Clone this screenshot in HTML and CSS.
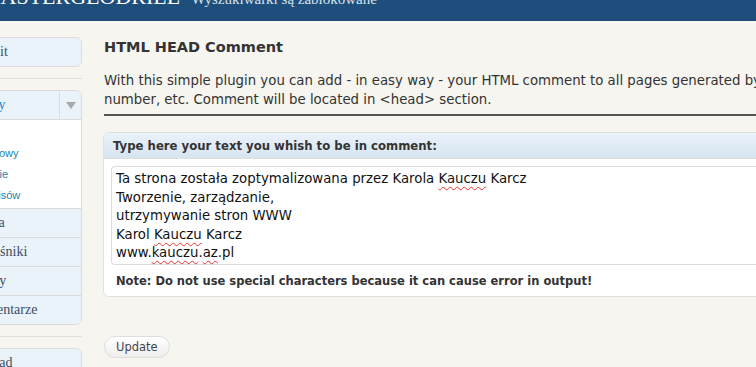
FILE: index.html
```html
<!DOCTYPE html>
<html lang="pl">
    <head>
        <meta charset="UTF-8" />
        <meta name="viewport" content="width=device-width, initial-scale=1.0" />
        <title>HTML HEAD Comment</title>

        <link rel="stylesheet" href="styles.css">
    </head>
    <body>
        <header class="top">
            <h1 class="site-name">MASTERGEODRILL</h1>
            <span class="privacy">Wyszukiwarki są zablokowane</span>
        </header>

        <div class="wrap">
            <nav class="menu">
                <ul class="group">
                    <li class="item first last"><span class="label">Kokpit</span></li>
                </ul>
                <div class="separator"></div>
                <ul class="group">
                    <li class="item first open">
                        <span class="label">Wpisy</span>
                        <span class="toggle"></span>
                    </li>
                    <li class="submenu">
                        <a>Edycja</a>
                        <a>Dodaj nowy</a>
                        <a>Kategorie</a>
                        <a>Tagi wpisów</a>
                    </li>
                    <li class="item"><span class="label">Media</span></li>
                    <li class="item"><span class="label">Odnośniki</span></li>
                    <li class="item"><span class="label">Strony</span></li>
                    <li class="item last"><span class="label">Komentarze</span></li>
                </ul>
                <div class="separator"></div>
                <ul class="group">
                    <li class="item first"><span class="label">Wygląd</span></li>
                </ul>
            </nav>

            <main class="content">
                <h2>HTML HEAD Comment</h2>
                <p class="intro">With this simple plugin you can add - in easy way - your HTML comment to all pages generated by WordPress, e.g. author, phone number, etc. Comment will be located in &lt;head&gt; section.</p>
                <hr />

                <div class="postbox">
                    <h3>Type here your text you whish to be in comment:</h3>
                    <div class="inside">
                        <div class="textbox">Ta strona została zoptymalizowana przez Karola <span class="typo">Kauczu</span> Karcz<br>Tworzenie, zarządzanie,<br>utrzymywanie stron WWW<br>Karol <span class="typo">Kauczu</span> Karcz<br>www.<span class="typo">kauczu</span>.<span class="typo">az</span>.pl</div>
                        <p class="note">Note: Do not use special characters because it can cause error in output!</p>
                    </div>
                </div>

                <button class="button">Update</button>
            </main>
        </div>
    </body>
</html>
```

FILE: styles.css
```css
* {
    box-sizing: border-box;
}
body {
    margin: 0;
    font-family: "DejaVu Sans", Verdana, sans-serif;
    font-size: 13.3px;
    color: #333;
    background-color: #f6f5f0;
    overflow: hidden;
}

.top {
    height: 21px;
    background-color: #1e4f7c;
    display: flex;
    align-items: flex-end;
    overflow: hidden;
    white-space: nowrap;
}

.site-name {
    margin: 0 0 13px -19px;
    font-family: "Liberation Serif", serif;
    font-weight: normal;
    font-size: 22px;
    line-height: 1;
    color: #fff;
}

.privacy {
    margin: 0 0 14px 11px;
    font-family: "Liberation Serif", serif;
    font-size: 15px;
    line-height: 1;
    color: #d6e0ea;
}

.wrap {
    display: flex;
    gap: 22px;
}

.menu {
    flex: 0 0 142px;
    margin-left: -60px;
    padding-top: 16px;
}

.group {
    margin: 0;
    padding: 0;
    list-style: none;
    border: 1px solid #dcdcdc;
    border-radius: 0 6px 6px 0;
    overflow: hidden;
}

.item {
    display: flex;
    height: 29px;
    align-items: center;
    padding-left: 28px;
    background-color: #eaf2fa;
    border-top: 1px solid #dcdcdc;
    font-family: "Liberation Serif", serif;
    font-size: 14px;
    color: #3a4d62;
}

.item.first {
    border-top: 0;
    height: 28px;
}

.item.open {
    color: #2a83c6;
}

.item .label {
    flex: 1;
    white-space: nowrap;
}

.toggle {
    align-self: stretch;
    width: 22px;
    border-left: 1px solid #dcdcdc;
    display: flex;
    align-items: center;
    justify-content: center;
}

.toggle::after {
    content: "";
    border-left: 5px solid transparent;
    border-right: 5px solid transparent;
    border-top: 7px solid #a9a9a9;
}

.submenu {
    background-color: #fff;
    border-top: 1px solid #dcdcdc;
    padding: 2px 0 2px 20px;
}

.submenu a {
    display: block;
    line-height: 21px;
    font-family: "Liberation Sans", Arial, sans-serif;
    font-size: 11px;
    color: #2583ad;
    white-space: nowrap;
}

.separator {
    height: 1px;
    margin: 11px 0;
    background-color: #dedede;
}

.content {
    flex: 1;
    min-width: 0;
    padding-top: 16px;
    white-space: nowrap;
}

h2 {
    margin: 0;
    font-size: 14.5px;
    line-height: 20px;
    font-weight: bold;
    color: #333;
}

.intro {
    margin: 14px 0 0;
    width: 880px;
    white-space: normal;
    line-height: 19px;
}

hr {
    margin: 5px 0 0;
    border: 0;
    border-top: 2px solid #555;
    width: 760px;
}

.postbox {
    margin: 16px 0 0 -1px;
    width: 760px;
    background-color: #fff;
    border: 1px solid #dfdfdf;
    border-radius: 6px 0 0 6px;
    overflow: hidden;
}

.postbox h3 {
    margin: 0;
    height: 26px;
    padding: 1px 0 0 9px;
    line-height: 25px;
    font-size: 11.7px;
    font-weight: bold;
    color: #333;
    background: linear-gradient(#eaf2fa, #d7e4f0);
    border-bottom: 1px solid #dfdfdf;
}

.inside {
    padding: 7px 0 0 7px;
}

.textbox {
    height: 99px;
    padding: 3px 4px;
    border: 1px solid #dcdcdc;
    border-right: 0;
    border-radius: 4px 0 0 4px;
    line-height: 18.5px;
    color: #111;
}

.typo {
    text-decoration: underline wavy #e33;
    text-decoration-thickness: 1px;
    text-underline-offset: 3px;
}

.note {
    margin: 0;
    padding: 9px 0 8px 5px;
    font-size: 11.5px;
    font-weight: bold;
    color: #333;
}

.button {
    margin-top: 39px;
    padding: 0 11px;
    height: 22px;
    border: 1px solid #dedede;
    border-radius: 11px;
    background: linear-gradient(#fff, #eeeeee);
    font-family: "DejaVu Sans", Verdana, sans-serif;
    font-size: 11.5px;
    color: #464646;
}
```
